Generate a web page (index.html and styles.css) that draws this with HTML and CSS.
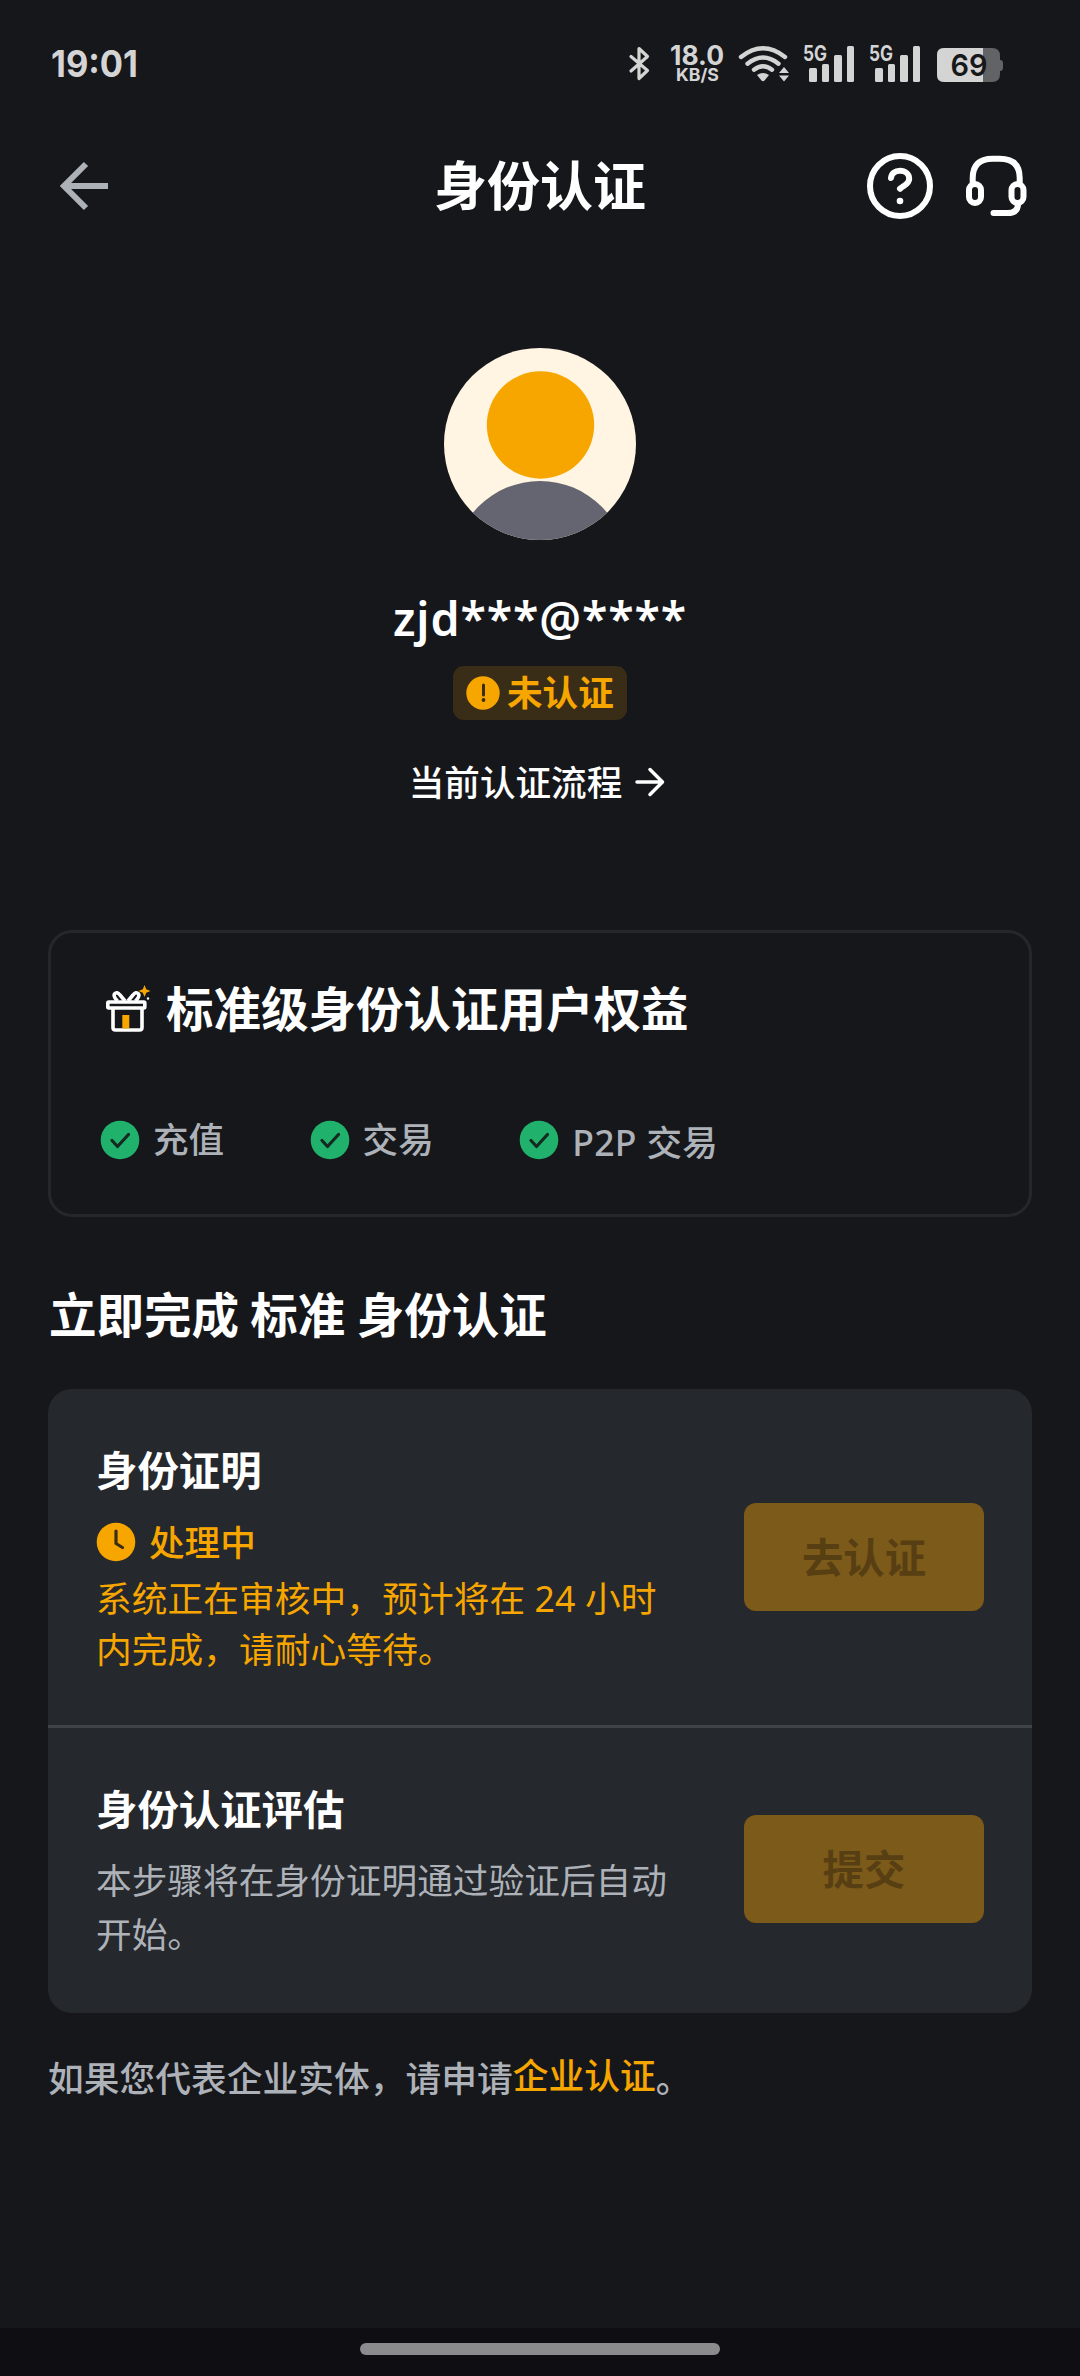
FILE: index.html
```html
<!DOCTYPE html>
<html lang="zh-CN">
<head>
<meta charset="utf-8">
<title>身份认证</title>
<link rel="stylesheet" href="styles.css">
</head>
<body>
<div class="screen">
  <div class="status">
    <svg class="clock" width="96" height="48" viewBox="0 0 96 48"><text x="0" y="36" textLength="87" lengthAdjust="spacingAndGlyphs" font-size="37" font-weight="700">19:01</text></svg>
    <svg class="indicators" width="380" height="48" viewBox="625 40 380 48">
      <path d="M631 56.500l16.500 14-8.500 8V48.500l8.500 8-16.500 14.500" fill="none" stroke="#d4d4d5" stroke-width="3.200" stroke-linejoin="round" stroke-linecap="round"/>
      <text x="670" y="65" textLength="54" lengthAdjust="spacingAndGlyphs" font-size="26.500" font-weight="700">18.0</text>
      <text x="676" y="81" textLength="43" lengthAdjust="spacingAndGlyphs" font-size="17" font-weight="700">KB/S</text>
      <g fill="none" stroke="#d4d4d5" stroke-width="4.400" stroke-linecap="round">
        <path d="M741 57Q763 39.500 785 57"/><path d="M747.500 63.700Q763 51.500 778.500 63.700"/><path d="M754 69.700Q763 63 772 69.700"/>
      </g>
      <path d="M757 75Q763 71 769 75L764.500 80.500Q763 82 761.500 80.500Z"/>
      <path d="M779 73l5-6 5 6zM779 75.500l5 6 5-6z"/>
      <g id="signal">
        <text x="803" y="61" textLength="24" lengthAdjust="spacingAndGlyphs" font-size="21" font-weight="700">5G</text>
        <rect x="809" y="68" width="8" height="14" rx="1.500"/><rect x="822" y="64" width="7" height="18" rx="1.500"/><rect x="834" y="55" width="8" height="27" rx="1.500"/><rect x="847" y="46" width="7" height="36" rx="1.500"/>
      </g>
      <use href="#signal" x="66"/>
      <path d="M944 48h48q8 0 8 8v4q3 0 3 3v5q0 3-3 3v3q0 8-8 8h-48q-7 0-7-7V55q0-7 7-7z" fill="#626365"/>
      <path d="M944 48h39v34h-39q-7 0-7-7V55q0-7 7-7z"/>
      <text x="950.500" y="76" textLength="37" lengthAdjust="spacingAndGlyphs" font-size="30" font-weight="600" class="level">69</text>
    </svg>
  </div>

  <header class="header">
    <svg class="back" width="52" height="52" viewBox="58 160 52 52"><path d="M86 164L64 186l22 22M64 186h44" fill="none" stroke="#adb1b8" stroke-width="6"/></svg>
    <h1 class="title">身份认证</h1>
    <div class="actions">
      <svg width="68" height="68" viewBox="866 152 68 68" fill="none" stroke="#fff" stroke-width="6" stroke-linecap="round"><circle cx="900" cy="186" r="30"/><path d="M891 178c.500-4.500 4-7.200 9-7.200 5.200 0 9.200 3.300 9.200 8 0 5.500-5.500 6.500-9.200 10"/><circle cx="900" cy="201" r="3.300" fill="#fff" stroke="none"/></svg>
      <svg width="64" height="64" viewBox="964 154 64 64" fill="none" stroke="#fff" stroke-width="6" stroke-linecap="round"><path d="M972.700 183v-5q0-19.300 20-19.300h7q20 0 20 19.300v5M1018 204q0 9-10.500 9h-14"/><rect x="969" y="184" width="12" height="19" rx="6"/><rect x="1011.500" y="184" width="12" height="19" rx="6"/></svg>
    </div>
  </header>

  <section class="profile">
    <svg width="192" height="192" viewBox="0 0 192 192"><defs><clipPath id="face"><circle cx="96" cy="96" r="96"/></clipPath></defs><g clip-path="url(#face)"><rect width="192" height="192" fill="#fff5e2"/><circle cx="96.500" cy="77" r="53.700" fill="#f7a600"/><circle cx="96" cy="220" r="87" fill="#656571"/></g></svg>
    <div class="name">zjd***@****</div>
    <div class="badge">
      <svg width="34" height="34" viewBox="0 0 34 34"><circle cx="17" cy="17" r="16.700" fill="#f7a600"/><path d="M17.500 9v10" stroke="#3a2d17" stroke-width="3" stroke-linecap="round"/><circle cx="17.500" cy="24" r="1.900" fill="#3a2d17"/></svg>
      <span class="badge-text">未认证</span>
    </div>
    <div class="process"><span>当前认证流程</span>
      <svg width="30" height="30" viewBox="0 0 30 30"><path d="M2 15h25M15 2.500L27.500 15 15 27.500" fill="none" stroke="#fff" stroke-width="3.500" stroke-linecap="round" stroke-linejoin="round"/></svg>
    </div>
  </section>

  <section class="benefits">
    <h2 class="benefits-title">
      <svg width="48" height="48" viewBox="104 986 48 48" fill="none" stroke="#fff" stroke-width="3.600" stroke-linejoin="round"><rect x="107.800" y="1003" width="37" height="6" rx="1"/><path d="M113 1010v18.500q0 2.500 2.500 2.500h24q2.500 0 2.500-2.500V1010M117.500 1002q-4.500-4.500-3-7 2.500-3 5.500 1l5 6M135.500 1002q4.500-4.500 3-7-2.500-3-5.500 1l-5 6"/><path d="M122.300 1016h7v13.500h-7z" fill="#f7a600" stroke="none"/><path d="M144.500 986l1.700 4.300 4.300 1.700-4.300 1.700-1.700 4.300-1.700-4.300-4.300-1.700 4.300-1.700z" fill="#f7a600" stroke="none"/><circle cx="148" cy="999.500" r="1.200" fill="#fff" stroke="none"/></svg>
      <span>标准级身份认证用户权益</span>
    </h2>
    <ul class="perks">
      <li><svg width="40" height="40" viewBox="0 0 40 40"><circle cx="20" cy="20" r="19.300" fill="#20b26c"/><path d="M12 20.500l5.500 6 11-12" fill="none" stroke="#142a20" stroke-width="3.200" stroke-linecap="round" stroke-linejoin="round"/></svg><span class="perk">充值</span></li>
      <li><svg width="40" height="40" viewBox="0 0 40 40"><circle cx="20" cy="20" r="19.300" fill="#20b26c"/><path d="M12 20.500l5.500 6 11-12" fill="none" stroke="#142a20" stroke-width="3.200" stroke-linecap="round" stroke-linejoin="round"/></svg><span class="perk">交易</span></li>
      <li><svg width="40" height="40" viewBox="0 0 40 40"><circle cx="20" cy="20" r="19.300" fill="#20b26c"/><path d="M12 20.500l5.500 6 11-12" fill="none" stroke="#142a20" stroke-width="3.200" stroke-linecap="round" stroke-linejoin="round"/></svg><span class="p2p">P2P 交易</span></li>
    </ul>
  </section>

  <h2 class="heading">立即完成 标准 身份认证</h2>

  <section class="steps">
    <div class="step">
      <div class="info">
        <h3 class="step-title">身份证明</h3>
        <div class="state"><svg width="40" height="40" viewBox="0 0 40 40"><circle cx="20" cy="20" r="19.300" fill="#f7a600"/><path d="M20 9v12.500l6.500 4" fill="none" stroke="#3a2d17" stroke-width="3.200" stroke-linecap="round" stroke-linejoin="round"/></svg><span>处理中</span></div>
        <p class="desc pending">系统正在审核中，预计将在 24 小时内完成，请耐心等待。</p>
      </div>
      <button class="action" disabled>去认证</button>
    </div>
    <div class="step evaluation">
      <div class="info">
        <h3 class="step-title">身份认证评估</h3>
        <p class="desc">本步骤将在身份证明通过验证后自动开始。</p>
      </div>
      <button class="action" disabled>提交</button>
    </div>
  </section>

  <p class="business">如果您代表企业实体，请申请<a class="link">企业认证</a>。</p>

  <div class="navbar"><div class="pill"></div></div>
</div>
</body>
</html>
```
FILE: styles.css
```css
* { box-sizing: border-box; margin: 0; padding: 0; }
body { background: #16171b; color: #fff; font-family: "Noto Sans", "Noto Sans CJK SC", sans-serif; }
svg { display: block; flex: none; }
.screen { width: 1080px; height: 2376px; display: flex; flex-direction: column; overflow: hidden; }

.status { height: 120px; padding: 0 75px 0 51px; display: flex; justify-content: space-between; align-items: center; fill: #d4d4d5; font-family: Inter, sans-serif; }
.clock { margin-top: 9px; }
.indicators { margin-top: 8px; }
.level { fill: #17181b; }

.header { height: 132px; padding: 0 52px 0 58px; display: grid; grid-template-columns: 1fr auto 1fr; align-items: center; }
.title { font-size: 53px; line-height: 70px; font-weight: 700; margin-right: 6px; }
.actions { display: flex; justify-content: flex-end; align-items: center; gap: 30px; }

.profile { padding-top: 96px; display: flex; flex-direction: column; align-items: center; }
.name { margin-top: 46px; font-size: 46.500px; line-height: 64px; font-weight: 650; letter-spacing: 0.900px; }
.badge { margin-top: 16px; width: 174px; height: 54px; padding: 0 13px; display: flex; align-items: center; gap: 7px; border-radius: 11px; background: #3a2d17; color: #f7a600; font-size: 35.600px; line-height: 54px; font-weight: 600; white-space: nowrap; }
.badge-text { margin-top: -2px; }
.process { margin: 37px 6px 0 0; display: flex; align-items: center; gap: 13px; font-size: 35.600px; line-height: 50px; font-weight: 500; }

.benefits { margin: 123px 48px 0; height: 287px; padding: 46px 48px 0 51px; border: 3px solid #25272b; border-radius: 24px; }
.benefits-title { display: flex; align-items: center; gap: 14px; font-size: 47.500px; line-height: 60px; font-weight: 700; padding-left: 2px; }
.perks { margin-top: 81px; list-style: none; display: flex; font-size: 35.600px; line-height: 40px; font-weight: 500; color: #adb1b8; margin-left: -2px; }
.perks li { width: 209.600px; height: 40px; display: flex; gap: 13px; white-space: nowrap; }
.perk { margin-top: -1px; }
.p2p { padding-top: 2px; letter-spacing: 0.300px; }

.heading { margin: 68px 0 0 49px; font-size: 47.500px; line-height: 60px; font-weight: 700; word-spacing: -1px; }

.steps { margin: 44px 48px 0; border-radius: 24px; background: #25282c; }
.step { height: 336px; padding: 53px 48px 0; display: flex; justify-content: space-between; }
.evaluation { height: 288px; border-top: 3px solid #404347; }
.info { width: 580px; }
.step-title { font-size: 41.400px; line-height: 56px; font-weight: 700; }
.state { margin-top: 24px; display: flex; gap: 13px; font-size: 35.600px; line-height: 40px; font-weight: 500; color: #f7a600; }
.desc { margin-top: 16px; font-size: 35.700px; line-height: 54px; font-weight: 400; color: #adb1b8; }
.pending { margin-top: 11px; line-height: 51px; letter-spacing: 0.080px; color: #f7a600; }
.action { margin-top: 61px; width: 240px; height: 108px; border: 0; border-radius: 12px; background: #7b5a1a; color: #573f13; font: 600 41.400px/108px "Noto Sans", "Noto Sans CJK SC", sans-serif; }
.evaluation .action { margin-top: 34px; }

.business { margin: 40px 0 0 48px; font-size: 35.750px; line-height: 50px; font-weight: 500; color: #adb1b8; }
.link { position: relative; top: -3px; color: #f7a600; }

.navbar { margin-top: auto; height: 48px; padding-top: 15px; background: #0f0e13; }
.pill { width: 360px; height: 12px; margin: 0 auto; border-radius: 6px; background: #8b8b8d; }
```
